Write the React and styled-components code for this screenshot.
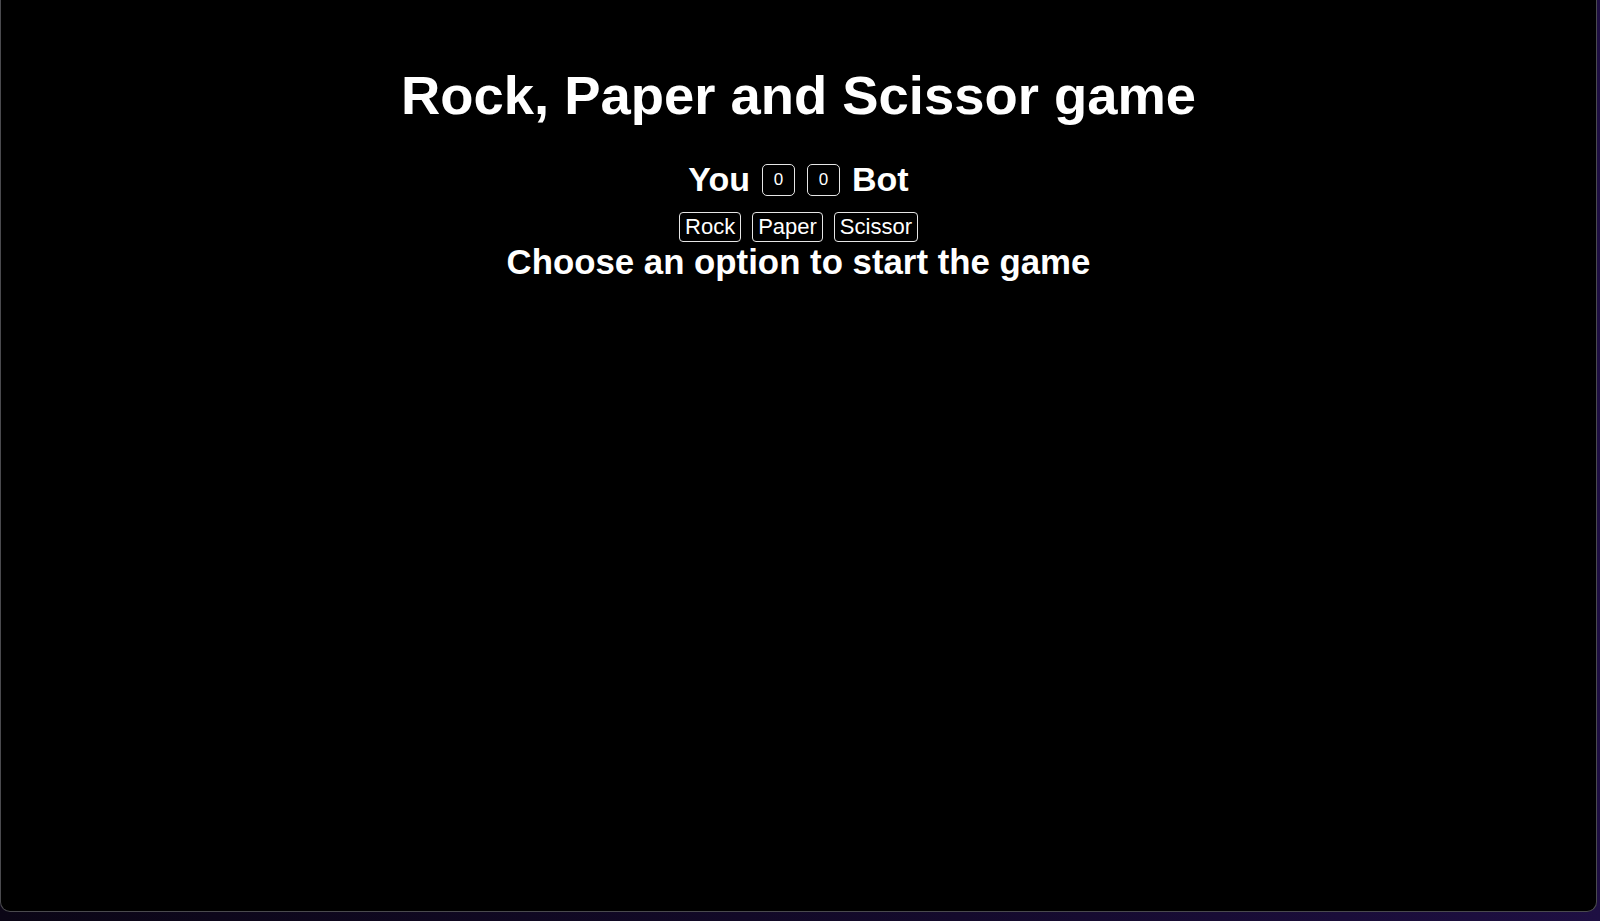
import React, { useState } from 'react';
import styled, { createGlobalStyle } from 'styled-components';

const GlobalStyle = createGlobalStyle`
  html, body {
    margin: 0;
    padding: 0;
    height: 100%;
  }
  body {
    background: linear-gradient(90deg, #0b0616 0%, #140a2c 60%, #1e0f42 100%);
    font-family: "Liberation Sans", Arial, sans-serif;
    overflow: hidden;
  }
`;

const Window = styled.div`
  box-sizing: border-box;
  width: 1597px;
  height: 912px;
  background: #000;
  border: 1px solid #4a4a4e;
  border-top: none;
  border-radius: 0 0 10px 10px;
  display: flex;
  flex-direction: column;
  align-items: center;
  padding-top: 65px;
  color: #fff;
`;

const Title = styled.h1`
  margin: 0 0 33px;
  font-size: 54.4px;
  line-height: 62px;
  font-weight: 700;
`;

const ScoreRow = styled.div`
  display: flex;
  align-items: center;
  gap: 12px;
  font-size: 34px;
  line-height: 39px;
  font-weight: 700;
  margin-bottom: 13px;
`;

const ScoreBox = styled.span`
  box-sizing: border-box;
  width: 33px;
  height: 32px;
  display: flex;
  align-items: center;
  justify-content: center;
  border: 1px solid #e6e6e6;
  border-radius: 5px;
  font-size: 17px;
  font-weight: 400;
`;

const Choices = styled.div`
  display: flex;
  gap: 11px;
`;

const ChoiceButton = styled.button`
  font-family: "Liberation Sans", Arial, sans-serif;
  font-size: 22px;
  line-height: 26px;
  padding: 1px 5px 1px;
  background: #000;
  color: #fff;
  border: 1px solid #e6e6e6;
  border-radius: 4px;
  cursor: pointer;
`;

const Message = styled.h2`
  margin: 0;
  font-size: 34.8px;
  line-height: 40px;
  font-weight: 700;
`;

const options = ['Rock', 'Paper', 'Scissor'];

export default function App() {
  const [score, setScore] = useState({ you: 0, bot: 0 });
  const [message, setMessage] = useState('Choose an option to start the game');

  const play = (choice) => {
    const bot = options[Math.floor(Math.random() * 3)];
    const you = options.indexOf(choice);
    const them = options.indexOf(bot);
    if (you === them) setMessage(`Draw! Both chose ${choice}`);
    else if ((you + 1) % 3 === them) {
      setScore(s => ({ ...s, bot: s.bot + 1 }));
      setMessage(`Bot wins! ${bot} beats ${choice}`);
    } else {
      setScore(s => ({ ...s, you: s.you + 1 }));
      setMessage(`You win! ${choice} beats ${bot}`);
    }
  };

  return (
    <>
      <GlobalStyle />
      <Window>
        <Title>Rock, Paper and Scissor game</Title>
        <ScoreRow>
          <span>You</span>
          <ScoreBox>{score.you}</ScoreBox>
          <ScoreBox>{score.bot}</ScoreBox>
          <span>Bot</span>
        </ScoreRow>
        <Choices>
          {options.map(o => (
            <ChoiceButton key={o} onClick={() => play(o)}>{o}</ChoiceButton>
          ))}
        </Choices>
        <Message>{message}</Message>
      </Window>
    </>
  );
}
